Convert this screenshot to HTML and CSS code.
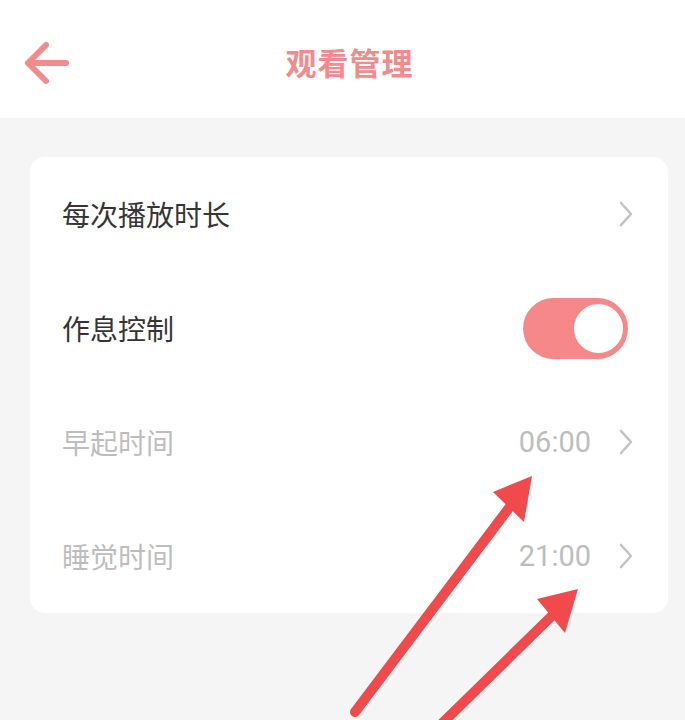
FILE: index.html
```html
<!DOCTYPE html>
<html lang="zh">
<head>
<meta charset="utf-8">
<link rel="stylesheet" href="styles.css">
</head>
<body>
<div class="page">
  <header class="header">
    <svg class="back" width="52" height="48" viewBox="0 0 52 48">
      <path d="M46 22 H8 M26 4 L8 22 L26 40" fill="none" stroke="#f28b8c" stroke-width="6" stroke-linecap="round" stroke-linejoin="round"/>
    </svg>
    <h1 class="title">观看管理</h1>
  </header>
  <main class="content">
    <section class="card">
      <div class="row">
        <span class="label">每次播放时长</span>
        <span class="right"><svg class="chev" width="14" height="26" viewBox="0 0 14 26"><path d="M2 2 L12 13 L2 24" fill="none" stroke="#c4c4c4" stroke-width="2.6" stroke-linecap="round" stroke-linejoin="round"/></svg></span>
      </div>
      <div class="row">
        <span class="label">作息控制</span>
        <span class="toggle"><span class="knob"></span></span>
      </div>
      <div class="row">
        <span class="label dim">早起时间</span>
        <span class="right"><span class="value">06:00</span><svg class="chev" width="14" height="26" viewBox="0 0 14 26"><path d="M2 2 L12 13 L2 24" fill="none" stroke="#c4c4c4" stroke-width="2.6" stroke-linecap="round" stroke-linejoin="round"/></svg></span>
      </div>
      <div class="row">
        <span class="label dim">睡觉时间</span>
        <span class="right"><span class="value">21:00</span><svg class="chev" width="14" height="26" viewBox="0 0 14 26"><path d="M2 2 L12 13 L2 24" fill="none" stroke="#c4c4c4" stroke-width="2.6" stroke-linecap="round" stroke-linejoin="round"/></svg></span>
      </div>
    </section>
  </main>
  <svg class="arrows" width="685" height="720" viewBox="0 0 685 720">
    <line x1="355" y1="712" x2="515" y2="500" stroke="#f04a4c" stroke-width="10" stroke-linecap="round"/>
    <polygon points="532,476 493,492 524,522" fill="#f04a4c"/>
    <line x1="425" y1="740" x2="560" y2="608" stroke="#f04a4c" stroke-width="10" stroke-linecap="round"/>
    <polygon points="578,589 537,599 565,633" fill="#f04a4c"/>
  </svg>
</div>
</body>
</html>
```

FILE: styles.css
```css
html, body {
  margin: 0;
  padding: 0;
}
body {
  font-family: "Noto Sans CJK SC", "Noto Sans", Roboto, sans-serif;
  background: #f5f5f5;
}
.page {
  position: relative;
  width: 685px;
  height: 720px;
  overflow: hidden;
  background: #f5f5f5;
}
.header {
  position: relative;
  height: 118px;
  background: #ffffff;
  display: flex;
  align-items: center;
  justify-content: center;
}
.back {
  position: absolute;
  left: 20px;
  top: 41px;
}
.title {
  margin: 4px 0 0 14px;
  font-size: 31px;
  font-weight: 700;
  color: #f28b8c;
  letter-spacing: 1px;
  line-height: 1;
}
.content {
  padding: 39px 17px 0 30px;
}
.card {
  background: #ffffff;
  border-radius: 15px;
  display: flex;
  flex-direction: column;
}
.row {
  height: 114px;
  display: flex;
  align-items: center;
  justify-content: space-between;
  padding: 0 35px 0 32px;
}
.label {
  font-size: 28px;
  color: #353535;
  line-height: 1;
}
.label.dim {
  color: #bdbdbd;
}
.right {
  display: flex;
  align-items: center;
  gap: 28px;
}
.value {
  font-family: Roboto, "Noto Sans", sans-serif;
  font-size: 29px;
  color: #bdbdbd;
  line-height: 1;
}
.chev {
  display: block;
}
.toggle {
  width: 105px;
  height: 61px;
  border-radius: 31px;
  background: #f6888a;
  display: flex;
  align-items: center;
  justify-content: flex-end;
  padding: 0 2px;
  box-sizing: border-box;
  margin-right: 5px;
}
.knob {
  width: 49px;
  height: 49px;
  border-radius: 50%;
  background: #ffffff;
  border: 3px solid #f6888a;
  box-sizing: content-box;
}
.arrows {
  position: absolute;
  left: 0;
  top: 0;
  pointer-events: none;
}
```
